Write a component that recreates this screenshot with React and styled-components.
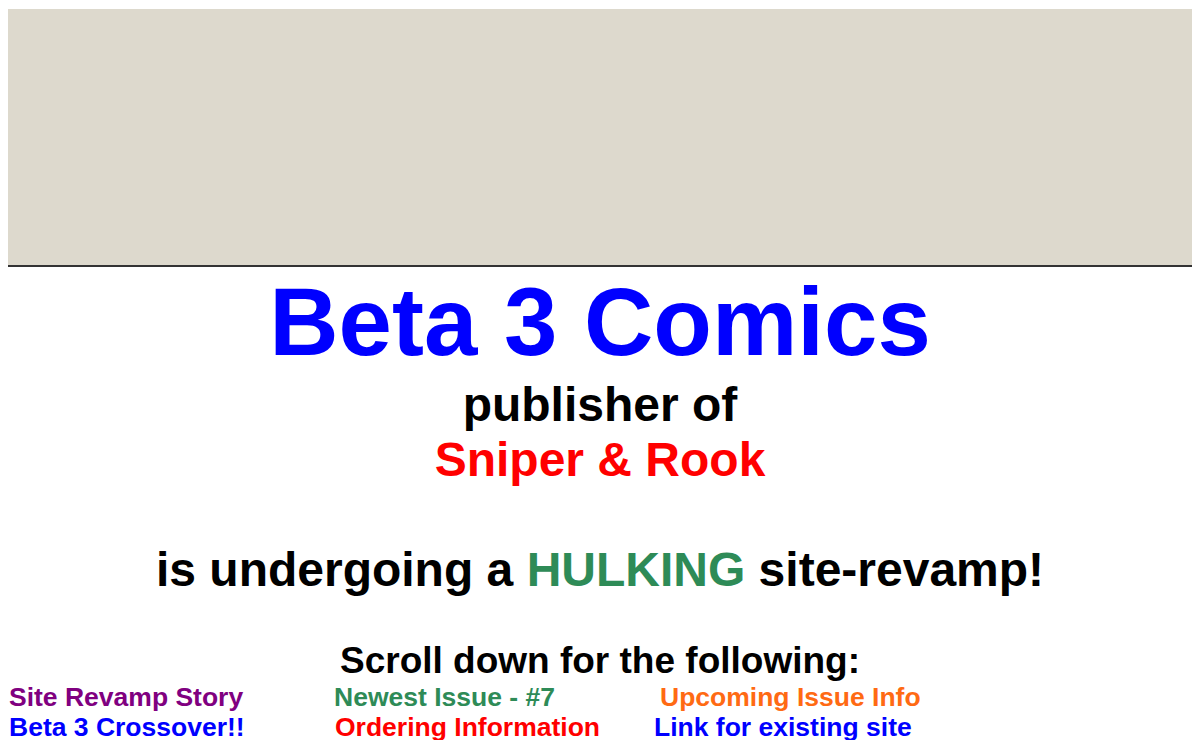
import React from 'react';
import styled, { createGlobalStyle } from 'styled-components';

const GlobalStyle = createGlobalStyle`
  body {
    margin: 8px;
    background: #ffffff;
    font-family: "Liberation Sans", Arial, sans-serif;
    font-weight: bold;
    color: #000000;
  }
`;

const Banner = styled.div`
  margin-top: 1px;
  height: 256px;
  background-color: #ddd9cd;
  border-bottom: 2px solid #333333;
`;

const Center = styled.div`
  text-align: center;
`;

const Line = styled.div`
  font-size: ${p => p.size}px;
  color: ${p => p.color || '#000000'};
  white-space: nowrap;
`;

const Blank = styled.div`
  font-size: ${p => p.size}px;
  height: ${p => p.size * 1.149}px;
`;

const Accent = styled.span`
  color: ${p => p.color};
`;

const LinkGrid = styled.div`
  display: grid;
  grid-template-columns: 326px 320px 1fr;
  font-size: 26.5px;
  line-height: 1.149;
`;

const LinkItem = styled.div`
  color: ${p => p.color};
  padding-left: ${p => p.indent || 0}px;
  white-space: nowrap;
`;

const links = [
  { text: 'Site Revamp Story', color: '#800080', indent: 1 },
  { text: 'Newest Issue - #7', color: '#2e8b57', indent: 0 },
  { text: 'Upcoming Issue Info', color: '#ff6a13', indent: 6 },
  { text: 'Beta 3 Crossover!!', color: '#0000ff', indent: 1 },
  { text: 'Ordering Information', color: '#ff0000', indent: 1 },
  { text: 'Link for existing site', color: '#0000ff', indent: 0 },
];

export default function App() {
  return (
    <>
      <GlobalStyle />
      <Banner />
      <Center>
        <Line size={96} color="#0000ff">Beta 3 Comics</Line>
        <Line size={48}>publisher of</Line>
        <Line size={48} color="#ff0000">Sniper &amp; Rook</Line>
        <Blank size={48} />
        <Line size={48}>
          is undergoing a <Accent color="#2e8b57">HULKING</Accent> site-revamp!
        </Line>
        <Blank size={37} />
        <Line size={37}>Scroll down for the following:</Line>
      </Center>
      <LinkGrid>
        {links.map(l => (
          <LinkItem key={l.text} color={l.color} indent={l.indent}>
            {l.text}
          </LinkItem>
        ))}
      </LinkGrid>
    </>
  );
}
